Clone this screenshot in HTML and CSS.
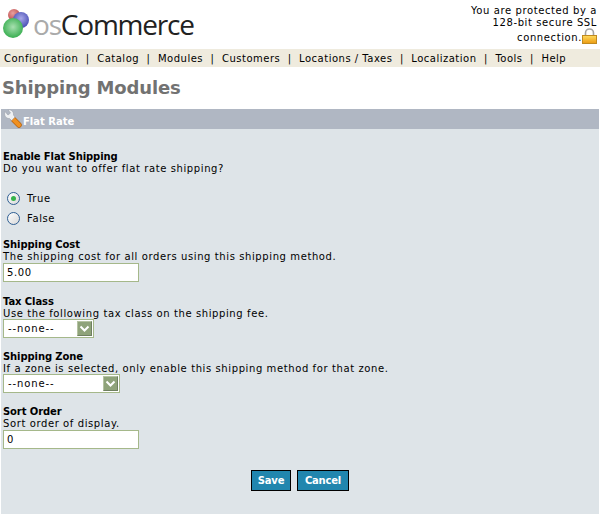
FILE: index.html
```html
<!DOCTYPE html>
<html lang="en">

<head>
  <meta charset="UTF-8">
  <title>Shipping Modules</title>
  <link rel="stylesheet" href="styles.css">
</head>

<body>

  <div class="header">
    <div class="logo">
      <svg class="logo-balls" width="30" height="40" viewBox="0 0 30 40">
        <defs>
          <radialGradient id="red" cx="40%" cy="35%" r="70%">
            <stop offset="0" stop-color="#e8a0a0" />
            <stop offset="1" stop-color="#b8403f" />
          </radialGradient>
          <radialGradient id="blue" cx="50%" cy="40%" r="65%">
            <stop offset="0" stop-color="#a8a8e8" />
            <stop offset="1" stop-color="#3d44b0" />
          </radialGradient>
          <radialGradient id="green" cx="50%" cy="45%" r="60%">
            <stop offset="0" stop-color="#a8e0b0" />
            <stop offset="1" stop-color="#2faa48" />
          </radialGradient>
        </defs>
        <circle cx="12" cy="15" r="6" fill="url(#red)" />
        <circle cx="19" cy="20" r="8" fill="url(#blue)" />
        <circle cx="11" cy="28" r="10" fill="url(#green)" />
      </svg>
      <span class="logo-text"><span class="logo-os">os</span>Commerce</span>
    </div>
    <div class="ssl">
      You are protected by a<br>
      128-bit secure SSL<br>
      <span class="ssl-last">connection.<svg class="lock" width="15" height="16" viewBox="0 0 15 16">
          <defs>
            <linearGradient id="gold" x1="0" y1="0" x2="0" y2="1">
              <stop offset="0" stop-color="#ffdc60" />
              <stop offset="1" stop-color="#eb9a10" />
            </linearGradient>
          </defs>
          <path d="M3.500 8V5a4 4 0 0 1 8 0v3" fill="none" stroke="#a4a4a4" stroke-width="1.600" />
          <rect x="0.500" y="7.500" width="14" height="8" fill="url(#gold)" stroke="#c08a20" />
        </svg></span>
    </div>
  </div>

  <ul class="nav">
    <li><a href="">Configuration</a></li>
    <li><a href="">Catalog</a></li>
    <li><a href="">Modules</a></li>
    <li><a href="">Customers</a></li>
    <li><a href="">Locations / Taxes</a></li>
    <li><a href="">Localization</a></li>
    <li><a href="">Tools</a></li>
    <li><a href="">Help</a></li>
  </ul>

  <h1 class="page-title">Shipping Modules</h1>

  <div class="panel">
    <div class="panel-head">
      <svg class="wrench" width="20" height="20" viewBox="0 0 20 20">
        <path d="M11.500 10.500 17 16" fill="none" stroke="#b86410" stroke-width="5.500" stroke-linecap="round" />
        <path d="M11.500 10.500 17 16" fill="none" stroke="#f09020" stroke-width="4" stroke-linecap="round" />
        <path d="M3 2.500 6 6 8.500 4 6 .8C9.500 .2 12 3 11.500 6L13 8 9.500 11.500 7.500 9.500C4 10 1.500 6 3 2.500Z" fill="#eef0f2" stroke="#9aa0aa" stroke-width=".6" />
      </svg>
      <span class="panel-title">Flat Rate</span>
    </div>

    <div class="panel-body">
      <div class="field first">
        <b>Enable Flat Shipping</b>
        <p>Do you want to offer flat rate shipping?</p>
        <label class="radio"><span class="radio-dot checked"></span>True</label>
        <label class="radio"><span class="radio-dot"></span>False</label>
      </div>

      <div class="field">
        <b>Shipping Cost</b>
        <p>The shipping cost for all orders using this shipping method.</p>
        <input class="text-input" type="text" value="5.00">
      </div>

      <div class="field">
        <b>Tax Class</b>
        <p>Use the following tax class on the shipping fee.</p>
        <div class="select small"><span>--none--</span><i class="arrow"><svg width="11" height="8" viewBox="0 0 11 8"><path d="M1.500 1.500 5.500 5.500 9.500 1.500" fill="none" stroke="#fff" stroke-width="2" /></svg></i></div>
      </div>

      <div class="field">
        <b>Shipping Zone</b>
        <p>If a zone is selected, only enable this shipping method for that zone.</p>
        <div class="select large"><span>--none--</span><i class="arrow"><svg width="11" height="8" viewBox="0 0 11 8"><path d="M1.500 1.500 5.500 5.500 9.500 1.500" fill="none" stroke="#fff" stroke-width="2" /></svg></i></div>
      </div>

      <div class="field">
        <b>Sort Order</b>
        <p>Sort order of display.</p>
        <input class="text-input" type="text" value="0">
      </div>

      <div class="buttons">
        <button class="btn save">Save</button>
        <button class="btn cancel">Cancel</button>
      </div>
    </div>
  </div>

</body>

</html>
```

FILE: styles.css
```css
ul,
li,
p,
h1 {
  list-style: none;
  padding: 0;
  margin: 0;
}

a {
  color: #000;
  text-decoration: none;
}

body {
  margin: 0;
  height: 514px;
  overflow: hidden;
  background-color: #fff;
  font-family: "DejaVu Sans", Verdana, sans-serif;
  font-size: 10px;
  letter-spacing: .6px;
  color: #000;
}

.header {
  height: 49px;
  display: flex;
  justify-content: space-between;
}

.logo {
  display: flex;
  padding-left: 2px;
}

.logo-balls {
  flex: none;
}

.logo-text {
  margin-left: 1px;
  margin-top: 6px;
  font-family: "Open Sans", sans-serif;
  font-size: 28px;
  line-height: 36px;
  letter-spacing: -1.2px;
  color: #222;
}

.logo-os {
  color: #aaa;
}

.ssl {
  padding: 5px 3px 0 0;
  text-align: right;
  line-height: 12px;
}

.ssl-last {
  display: flex;
  justify-content: flex-end;
  align-items: flex-end;
  height: 16px;
  margin-top: -1px;
}

.lock {
  flex: none;
}

.nav {
  height: 18px;
  display: flex;
  padding-left: 4px;
  background-color: #efebde;
  line-height: 20px;
  letter-spacing: .5px;
}

.nav>li+li {
  margin-left: 7.500px;
}

.nav>li+li::before {
  content: "|";
  margin-right: 7.500px;
}

.page-title {
  height: 42px;
  padding-left: 2px;
  font-size: 18px;
  letter-spacing: -.15px;
  line-height: 42px;
  color: #727272;
}

.panel {
  margin: 0 1px;
  background-color: #dee4e8;
  height: 405px;
}

.panel-head {
  height: 20px;
  display: flex;
  align-items: center;
  background-color: #b0b7c3;
  color: #fff;
}

.wrench {
  flex: none;
  margin-top: -1px;
  margin-left: 1px;
  margin-right: 1px;
}

.panel-title {
  padding-top: 4px;
  font-weight: bold;
  letter-spacing: 0;
}

.panel-body {
  padding: 22px 2px 0;
  line-height: 12px;
}

.field {
  margin-bottom: 14px;
}

.field.first {
  margin-bottom: 10px;
}

.field b,
.field p {
  display: block;
}

.field b {
  letter-spacing: -.1px;
}

.radio {
  display: flex;
  align-items: center;
  height: 20px;
  padding-left: 4px;
}

.field p+.radio {
  margin-top: 14px;
}

.radio-dot {
  width: 11px;
  height: 11px;
  margin-top: -2px;
  margin-right: 7px;
  border: 1px solid #2f5f93;
  border-radius: 50%;
  background: linear-gradient(135deg, #fff, #d8d8d8);
  position: relative;
}

.radio-dot.checked::after {
  content: "";
  position: absolute;
  left: 3px;
  top: 3px;
  width: 5px;
  height: 5px;
  border-radius: 50%;
  background-color: #35b34a;
}

.text-input {
  display: block;
  box-sizing: border-box;
  width: 136px;
  height: 19px;
  padding: 0 3px;
  border: 1px solid #a5b88a;
  background-color: #fff;
  font-family: inherit;
  font-size: 10px;
  letter-spacing: inherit;
  color: #000;
}

.select {
  box-sizing: border-box;
  height: 19px;
  margin: -1px 0;
  display: flex;
  justify-content: space-between;
  align-items: center;
  padding: 0 1px 0 4px;
  border: 1px solid #a5b88a;
  background-color: #fff;
  letter-spacing: .9px;
}

.select.small {
  width: 91px;
}

.select.large {
  width: 117px;
}

.arrow {
  box-sizing: border-box;
  width: 15px;
  height: 15px;
  display: flex;
  align-items: center;
  justify-content: center;
  border: 1px solid;
  border-color: #b5c3a2 #6f8060 #6f8060 #b5c3a2;
  background-color: #8fa37a;
}

.buttons {
  display: flex;
  justify-content: center;
  gap: 6px;
  margin-top: 21px;
}

.btn {
  box-sizing: border-box;
  height: 21px;
  padding: 0;
  border: 1px solid #000;
  background-color: #2186ae;
  color: #fff;
  font-family: inherit;
  font-size: 10px;
  font-weight: bold;
  letter-spacing: -.2px;
}

.btn.save {
  width: 40px;
}

.btn.cancel {
  width: 52px;
}
```
